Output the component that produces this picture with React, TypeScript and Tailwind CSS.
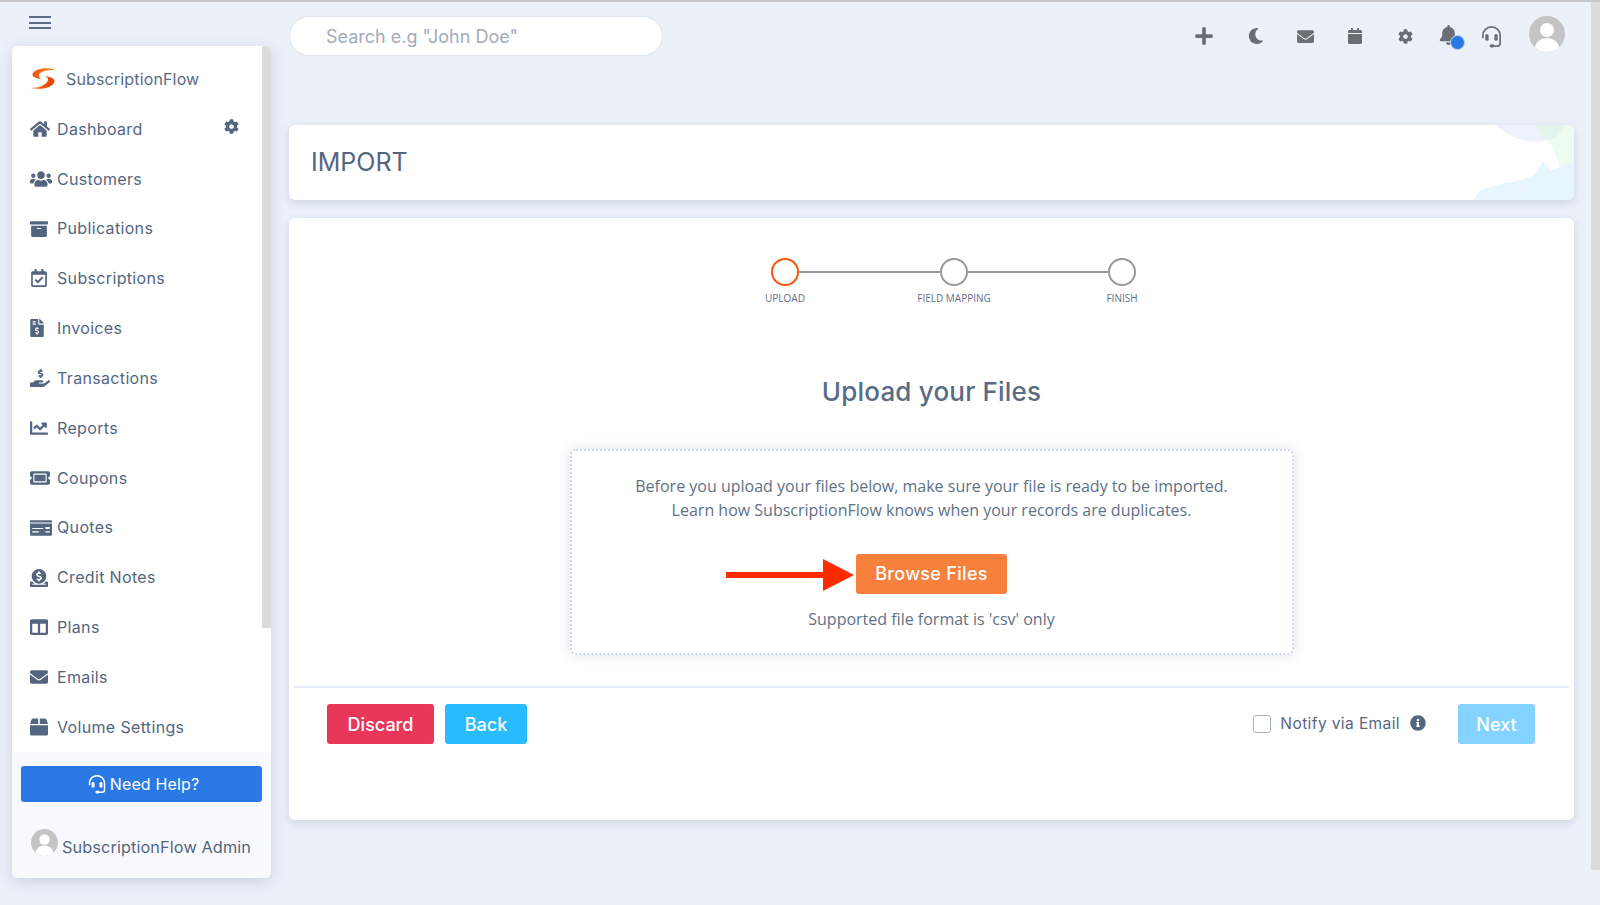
import React from "react";
import {
  FaHome, FaUsers, FaArchive, FaRegCalendarCheck, FaFileInvoiceDollar, FaHandHoldingUsd,
  FaChartLine, FaTicketAlt, FaMoneyCheck, FaDonate, FaColumns, FaEnvelope,
  FaCog, FaPlus, FaMoon, FaCalendar, FaBell, FaInfoCircle,
} from "react-icons/fa";

// closed box with a split lid, FontAwesome's box icons are drawn in perspective
function VolumeBox({ className }: { className?: string }) {
  return (
    <svg viewBox="0 0 18 18" fill="currentColor" className={className}>
      <path d="M3 0.5 H8.2 V6 H0 L1.6 1.5 Q2 0.5 3 0.5 Z" />
      <path d="M9.8 0.5 H15 Q16 0.5 16.4 1.5 L18 6 H9.8 Z" />
      <path d="M0 7.2 H18 V16 Q18 17.5 16.5 17.5 H1.5 Q0 17.5 0 16 Z" />
    </svg>
  );
}

const NAV = [
  { label: "Dashboard", icon: FaHome, cls: "w-[20px] h-[20px]" },
  { label: "Customers", icon: FaUsers, cls: "w-[22px] h-[22px]" },
  { label: "Publications", icon: FaArchive, cls: "w-[18px] h-[18px]" },
  { label: "Subscriptions", icon: FaRegCalendarCheck, cls: "w-[18px] h-[18px]" },
  { label: "Invoices", icon: FaFileInvoiceDollar, cls: "w-[14px] h-[18px]" },
  { label: "Transactions", icon: FaHandHoldingUsd, cls: "w-[20px] h-[20px]" },
  { label: "Reports", icon: FaChartLine, cls: "w-[18px] h-[18px]" },
  { label: "Coupons", icon: FaTicketAlt, cls: "w-[20px] h-[20px]" },
  { label: "Quotes", icon: FaMoneyCheck, cls: "w-[22px] h-[22px]" },
  { label: "Credit Notes", icon: FaDonate, cls: "w-[18px] h-[18px]" },
  { label: "Plans", icon: FaColumns, cls: "w-[18px] h-[18px]" },
  { label: "Emails", icon: FaEnvelope, cls: "w-[18px] h-[18px]" },
  { label: "Volume Settings", icon: VolumeBox, cls: "w-[18px] h-[18px]" },
];

function Avatar({ className }: { className: string }) {
  return (
    <svg viewBox="0 0 36 36" className={className}>
      <defs>
        <clipPath id="avatarClip"><circle cx="18" cy="18" r="18" /></clipPath>
      </defs>
      <g clipPath="url(#avatarClip)">
        <rect width="36" height="36" fill="#c4c4c4" />
        <circle cx="18" cy="14" r="7" fill="#fff" />
        <ellipse cx="18" cy="32" rx="12" ry="10" fill="#fff" />
      </g>
    </svg>
  );
}

function Headset({ className }: { className: string }) {
  return (
    <svg viewBox="0 0 24 24" fill="none" stroke="currentColor" strokeLinecap="round" className={className}>
      <path d="M3 13 V11 A9 9 0 0 1 21 11 V19 A3 3 0 0 1 18 22 H12" strokeWidth="1.8" />
      <rect x="10" y="20" width="5" height="3.4" rx="1.7" fill="currentColor" stroke="none" />
      <rect x="5.5" y="9.5" width="3.5" height="7" rx="1.7" fill="currentColor" stroke="none" />
      <rect x="15" y="9.5" width="3.5" height="7" rx="1.7" fill="currentColor" stroke="none" />
    </svg>
  );
}

function Logo() {
  return (
    <svg viewBox="0 0 26 22" className="w-[26px] h-[22px]">
      <defs>
        <linearGradient id="logoA" x1="0" y1="0" x2="1" y2="0">
          <stop offset="0" stopColor="#f4500f" />
          <stop offset="1" stopColor="#fb9a1e" />
        </linearGradient>
        <linearGradient id="logoB" x1="0" y1="0" x2="1" y2="0">
          <stop offset="0" stopColor="#fb7a1a" />
          <stop offset="1" stopColor="#e8400c" />
        </linearGradient>
      </defs>
      <path d="M26 2 C18 -1 7 0 3 5 C1 9 6 10 11 11 C8 8 8 6 12 4 C16 2 21 2 26 2 Z" fill="url(#logoA)" />
      <path d="M0 20 C8 21 19 22 24 15 C26 11 22 9 15 8 C19 10 19 13 15 16 C11 19 6 20 0 20 Z" fill="url(#logoB)" />
    </svg>
  );
}

function Step({ label, active }: { label: string; active?: boolean }) {
  return (
    <div className="relative w-[28px] h-[28px] shrink-0">
      <div className={active ? "w-[28px] h-[28px] rounded-full border-[2.5px] border-[#f9560f] bg-white" : "w-[28px] h-[28px] rounded-full border-[2.5px] border-[#999999] bg-white"} />
      <div className="absolute left-1/2 top-[33px] -translate-x-1/2 whitespace-nowrap text-[10px] leading-[14px] text-[#5f7186] font-['Open_Sans',sans-serif]">
        {label}
      </div>
    </div>
  );
}

export default function App() {
  return (
    <div className="w-full h-[905px] overflow-hidden flex bg-[#ebf0f9] border-t-2 border-[#c9c9cb] font-['Inter',sans-serif] text-[#54667f]">
      {/* left column */}
      <div className="w-[271px] shrink-0 pl-3">
        <div className="h-[44px] pl-[17px] pt-[14px]">
          <div className="w-[22px] flex flex-col gap-[3.5px]">
            <div className="h-[2px] bg-[#5d6f87]" />
            <div className="h-[2px] bg-[#5d6f87]" />
            <div className="h-[2px] bg-[#5d6f87]" />
          </div>
        </div>
        <aside className="relative w-[259px] h-[832px] rounded-[6px] bg-white shadow-[0_4px_14px_rgba(90,105,140,0.22)] overflow-hidden flex flex-col">
          <div className="absolute right-0 top-0 w-[9px] h-[582px] bg-[#dcdcdc]" />
          <div className="pt-[8px] pl-[18px] h-[58px] flex items-center gap-[10px]">
            <Logo />
            <span className="text-[16px] tracking-[0.15px] text-[#5a6b82]">SubscriptionFlow</span>
          </div>
          <nav className="h-[648px] pr-[9px]">
            {NAV.map(({ label, icon: Icon, cls }) => (
              <div key={label} className="h-[49.85px] flex items-center relative">
                <div className="w-[45px] shrink-0 pl-[18px] flex items-center">
                  <Icon className={`${cls} text-[#54667f]`} />
                </div>
                <span className="text-[16px] tracking-[0.34px] -mt-[0.5px]">{label}</span>
                {label === "Dashboard" && <FaCog className="absolute left-[212px] top-[15px] w-[15px] h-[15px] text-[#54667f]" />}
              </div>
            ))}
          </nav>
          <div className="flex-1 bg-[#f8f9fd] px-[9px] pt-[14px]">
            <button className="w-[241px] h-[36px] rounded-[3px] bg-[#2a78e4] text-white text-[16px] tracking-[0.15px] flex items-center justify-center gap-[3px] pl-[3px]">
              <Headset className="w-[20px] h-[20px]" />
              Need Help?
            </button>
            <div className="mt-[27px] pl-[10px] flex items-start gap-[4px]">
              <Avatar className="w-[27px] h-[27px]" />
              <span className="mt-[6px] text-[16.3px] leading-[24px] tracking-[0.1px] whitespace-nowrap">SubscriptionFlow Admin</span>
            </div>
          </div>
        </aside>
      </div>

      {/* main column */}
      <main className="flex-1 min-w-0 pl-[18px] pr-[17px]">
        <header className="h-[123px] pt-[14px] flex items-start">
          <div className="w-[374px] h-[40px] rounded-full bg-white border border-[#dfe4ee] pl-[36px] flex items-center text-[18px] text-[#a3abb8]">
            Search e.g "John Doe"
          </div>
          <div className="flex-1 flex items-center justify-end text-[#6b6e73] h-[40px]">
            <div className="w-[53px] flex justify-center"><FaPlus className="w-[20px] h-[20px]" /></div>
            <div className="w-[50px] flex justify-center"><FaMoon className="w-[16px] h-[16px]" /></div>
            <div className="w-[50px] flex justify-center"><FaEnvelope className="w-[17px] h-[17px]" /></div>
            <div className="w-[49px] flex justify-center"><FaCalendar className="w-[16px] h-[16px]" /></div>
            <div className="w-[47px] pl-[4px] flex justify-center"><FaCog className="w-[15px] h-[15px]" /></div>
            <div className="w-[43px] flex justify-center relative">
              <FaBell className="w-[19px] h-[20px] -mt-[3px]" />
              <div className="absolute left-[23px] top-[7px] w-[15px] h-[15px] rounded-full bg-[#2a78e4] border border-white/60" />
            </div>
            <div className="w-[43px] flex justify-center"><Headset className="w-[23px] h-[23px]" /></div>
            <div className="w-[61.5px] pl-[16px] pr-[7.5px] -mt-[5px]"><Avatar className="w-[36px] h-[36px]" /></div>
          </div>
        </header>

        <section className="relative h-[75px] rounded-[6px] bg-white shadow-[0_3px_8px_rgba(90,105,140,0.2)] overflow-hidden flex items-center pl-[22px]">
          <h1 className="text-[25px] font-normal">IMPORT</h1>
          <svg viewBox="0 0 100 75" className="absolute right-0 top-0 w-[100px] h-[75px]">
            <path d="M61 0 C65 8 72 14 76 18 C86 32 82 50 100 62 V0 Z" fill="#eefbf1" />
            <path d="M0 75 C4 66 8 65 13 63 C26 58 40 58 53 53 C70 47 88 43 100 35 V75 Z" fill="#e8f5fd" />
            <path d="M45 75 C52 66 55 60 53 53 C62 50 66 44 68 36 C76 44 88 58 100 62 V75 Z" fill="#e6f6fd" />
            <path d="M21 0 C32 10 48 17 61 17 C74 17 85 10 91 0 Z" fill="#eef2fd" />
            <path d="M61 0 C65 8 70 14 74 16 C82 13 87 7 91 0 Z" fill="#e3f5ec" />
          </svg>
        </section>

        <section className="mt-[18px] h-[602px] rounded-[6px] bg-white shadow-[0_3px_8px_rgba(90,105,140,0.2)] px-[5px] flex flex-col">
          <div className="mt-[40px] flex items-center justify-center translate-x-[22px]">
            <Step label="UPLOAD" active />
            <div className="w-[141px] h-[2.5px] bg-[#999999]" />
            <Step label="FIELD MAPPING" />
            <div className="w-[140px] h-[2.5px] bg-[#999999]" />
            <Step label="FINISH" />
          </div>

          <h2 className="mt-[88px] text-center text-[26px] leading-[36px] font-medium tracking-[0.2px] text-[#586c85]">Upload your Files</h2>

          <div className="mt-[39px] mx-auto w-[724px] h-[206px] rounded-[6px] border-2 border-dotted border-[#c8d6ee] shadow-[0_0_12px_rgba(90,105,140,0.2)] flex flex-col items-center pt-[23px] font-['Open_Sans',sans-serif] text-[16px] leading-[24px] text-[#5f7186]">
            <p>Before you upload your files below, make sure your file is ready to be imported.</p>
            <p>Learn how SubscriptionFlow knows when your records are duplicates.</p>
            <div className="relative mt-[32px]">
              <svg viewBox="0 0 128 32" className="absolute right-[153px] top-[5px] w-[128px] h-[32px]">
                <rect x="0" y="13" width="100" height="6" fill="#ff2a00" />
                <polygon points="97,0 128,16 97,32" fill="#ff2a00" />
              </svg>
              <button className="w-[151px] h-[40px] rounded-[3px] bg-[#f7803c] text-white text-[18px] font-medium tracking-[0.3px] font-['Inter',sans-serif]">
                Browse Files
              </button>
            </div>
            <p className="mt-[13px]">Supported file format is 'csv' only</p>
          </div>

          <div className="mt-[31px] h-[2px] bg-[#e6ebf7]" />

          <div className="mt-[16px] pl-[33px] pr-[34px] flex items-center">
            <button className="w-[107px] h-[40px] rounded-[3px] bg-[#e83759] text-white text-[18px] font-medium">Discard</button>
            <button className="ml-[11px] w-[82px] h-[40px] rounded-[3px] bg-[#28bbff] text-white text-[18px] font-medium">Back</button>
            <div className="ml-auto w-[18px] h-[18px] rounded-[3px] border border-[#a3afc4]" />
            <span className="ml-[9px] text-[15.5px] tracking-[0.4px]">Notify via Email</span>
            <FaInfoCircle className="ml-[10px] -mt-[2px] w-[16px] h-[16px]" />
            <button className="ml-[32px] w-[77px] h-[40px] rounded-[3px] bg-[#83d2ff] text-white text-[18px] font-medium">Next</button>
          </div>
        </section>
      </main>

      {/* page scrollbar */}
      <div className="w-[9px] h-[868px] shrink-0 bg-[#dcdcdc]" />
    </div>
  );
}
